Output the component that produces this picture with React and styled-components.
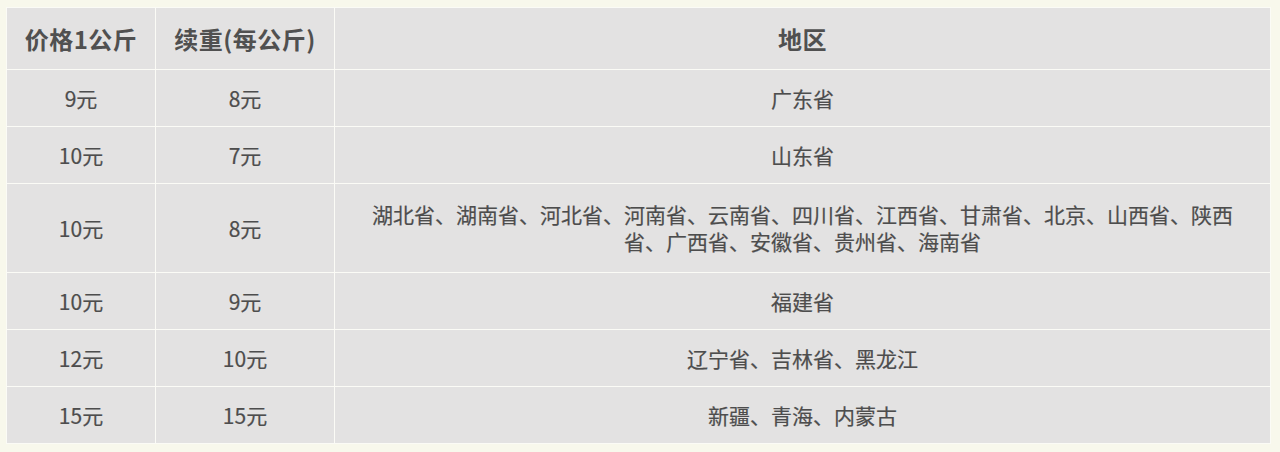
import React from 'react';
import styled, { createGlobalStyle } from 'styled-components';

const GlobalStyle = createGlobalStyle`
  html, body {
    margin: 0;
    padding: 0;
    background: #f8f8ec;
  }
  body {
    font-family: "Noto Sans CJK SC", "Noto Sans", sans-serif;
  }
`;

const Page = styled.div`
  width: 1280px;
  height: 452px;
  box-sizing: border-box;
  padding: 7px 9px 0 6px;
  background: #f8f8ec;
`;

const PriceTable = styled.table`
  width: 1265px;
  table-layout: fixed;
  border-collapse: collapse;
  color: #505050;
`;

const HeadCell = styled.th`
  height: 61px;
  padding: 0;
  background: #e3e2e2;
  border: 1px solid #fbfbf6;
  font-size: 24px;
  font-weight: 700;
  letter-spacing: 0.5px;
  text-align: center;
  vertical-align: middle;
`;

const Row = styled.tr`
  height: ${(props) => (props.tall ? '89px' : '57px')};
`;

const Cell = styled.td`
  padding: 0 ${(props) => (props.wide ? '30px' : '0')};
  background: #e3e2e2;
  border: 1px solid #fbfbf6;
  font-size: 21px;
  line-height: 27px;
  text-align: center;
  vertical-align: middle;
  color: #4d4d4d;
  -webkit-text-stroke: 0.2px #4d4d4d;
`;

const rows = [
  { price: '9元', extra: '8元', area: '广东省' },
  { price: '10元', extra: '7元', area: '山东省' },
  {
    price: '10元',
    extra: '8元',
    area: '湖北省、湖南省、河北省、河南省、云南省、四川省、江西省、甘肃省、北京、山西省、陕西省、广西省、安徽省、贵州省、海南省',
    tall: true,
  },
  { price: '10元', extra: '9元', area: '福建省' },
  { price: '12元', extra: '10元', area: '辽宁省、吉林省、黑龙江' },
  { price: '15元', extra: '15元', area: '新疆、青海、内蒙古' },
];

export default function App() {
  return (
    <>
      <GlobalStyle />
      <Page>
        <PriceTable>
          <colgroup>
            <col style={{ width: '149px' }} />
            <col style={{ width: '179px' }} />
            <col />
          </colgroup>
          <thead>
            <tr>
              <HeadCell>价格1公斤</HeadCell>
              <HeadCell>续重(每公斤)</HeadCell>
              <HeadCell>地区</HeadCell>
            </tr>
          </thead>
          <tbody>
            {rows.map((r, i) => (
              <Row key={i} tall={r.tall}>
                <Cell>{r.price}</Cell>
                <Cell>{r.extra}</Cell>
                <Cell wide>{r.area}</Cell>
              </Row>
            ))}
          </tbody>
        </PriceTable>
      </Page>
    </>
  );
}
